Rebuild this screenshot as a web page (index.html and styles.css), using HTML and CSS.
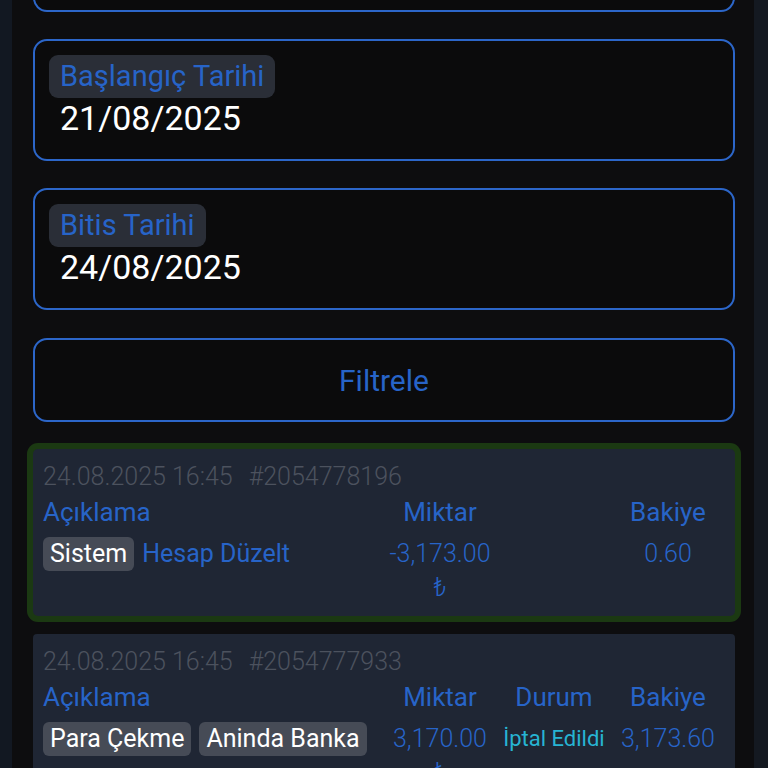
FILE: index.html
```html
<!DOCTYPE html>
<html lang="tr">
<head>
<meta charset="utf-8">
<link rel="stylesheet" href="styles.css">
</head>
<body>
<div class="shell">
  <div class="gutter-left"></div>
  <main class="main">
    <div class="field field-hidden"></div>
    <div class="field"><span class="chip-label">Başlangıç Tarihi</span><div class="value">21/08/2025</div></div>
    <div class="field"><span class="chip-label">Bitis Tarihi</span><div class="value">24/08/2025</div></div>
    <button class="btn">Filtrele</button>

    <div class="card card-active">
      <div class="meta"><span>24.08.2025 16:45</span><span class="tx">#2054778196</span></div>
      <div class="grid">
        <div class="head left">Açıklama</div>
        <div class="head">Miktar</div>
        <div class="head"></div>
        <div class="head">Bakiye</div>
        <div class="desc"><span class="tag">Sistem</span><span class="desc-text">Hesap Düzelt</span></div>
        <div class="amount">-3,173.00<br>₺</div>
        <div class="status"></div>
        <div class="amount">0.60</div>
      </div>
    </div>

    <div class="card">
      <div class="meta"><span>24.08.2025 16:45</span><span class="tx">#2054777933</span></div>
      <div class="grid">
        <div class="head left">Açıklama</div>
        <div class="head">Miktar</div>
        <div class="head">Durum</div>
        <div class="head">Bakiye</div>
        <div class="desc"><span class="tag">Para Çekme</span><span class="tag">Aninda Banka</span></div>
        <div class="amount">3,170.00<br>₺</div>
        <div class="status">İptal Edildi</div>
        <div class="amount">3,173.60</div>
      </div>
    </div>
  </main>
  <div class="gutter-right"></div>
</div>
</body>
</html>
```
FILE: styles.css
```css
html, body {
  margin: 0;
  padding: 0;
  background: #0d0d0f;
  height: 100%;
  overflow: hidden;
}
body {
  font-family: Roboto, "Noto Sans", sans-serif;
}
.shell {
  display: flex;
  min-height: 100%;
}
.gutter-left {
  width: 12px;
  flex: none;
  background: #121822;
}
.gutter-right {
  width: 14px;
  flex: none;
  background: #141921;
}
.main {
  flex: 1;
  display: flex;
  flex-direction: column;
  padding: 0 19px 0 21px;
  margin-top: -110px;
  background: #0d0d0f;
}
.field {
  box-sizing: border-box;
  height: 122px;
  border: 2px solid #2c66c9;
  border-radius: 14px;
  background: #0b0b0c;
  padding: 14px 14px 0;
  margin-bottom: 27px;
  display: flex;
  flex-direction: column;
  align-items: flex-start;
}
.chip-label {
  display: inline-block;
  height: 43px;
  line-height: 43px;
  padding: 0 11px 0 11px;
  border-radius: 9px;
  background: #2a2e37;
  color: #2764c8;
  font-size: 29px;
}
.value {
  color: #ffffff;
  font-size: 34px;
  line-height: 40px;
  padding-left: 11px;
}
.btn {
  box-sizing: border-box;
  height: 84px;
  border: 2px solid #2c66c9;
  border-radius: 14px;
  background: #0b0b0c;
  color: #2764c8;
  font-family: Roboto, sans-serif;
  font-size: 30px;
  margin: 1px 0 27px;
  padding: 0;
}
.card {
  background: #1f2634;
  border-radius: 4px;
  padding: 12px 10px 14px 10px;
  margin-bottom: 18px;
}
.card-active {
  box-shadow: 0 0 0 6px #1b3912;
  border-radius: 5px;
  height: 167px;
  box-sizing: border-box;
}
.meta {
  color: #4c525e;
  font-weight: 300;
  font-size: 25px;
  line-height: 31px;
  display: flex;
  gap: 16px;
}
.grid {
  display: grid;
  grid-template-columns: 1fr 114px 114px 114px;
  align-items: start;
}
.head {
  color: #2764c8;
  font-size: 26px;
  line-height: 40px;
  text-align: center;
}
.head.left {
  text-align: left;
}
.desc {
  display: flex;
  gap: 8px;
  align-items: center;
  padding-top: 5px;
}
.tag {
  background: #464b56;
  color: #ffffff;
  font-size: 25px;
  line-height: 34px;
  padding: 0 7px;
  border-radius: 6px;
}
.desc-text {
  color: #2764c8;
  font-size: 25px;
  line-height: 34px;
}
.amount {
  color: #2764c8;
  font-size: 25px;
  font-weight: 300;
  line-height: 34px;
  text-align: center;
  padding-top: 5px;
}
.status {
  color: #27b4d3;
  font-size: 22px;
  line-height: 34px;
  text-align: center;
  padding-top: 5px;
  white-space: nowrap;
}
```
